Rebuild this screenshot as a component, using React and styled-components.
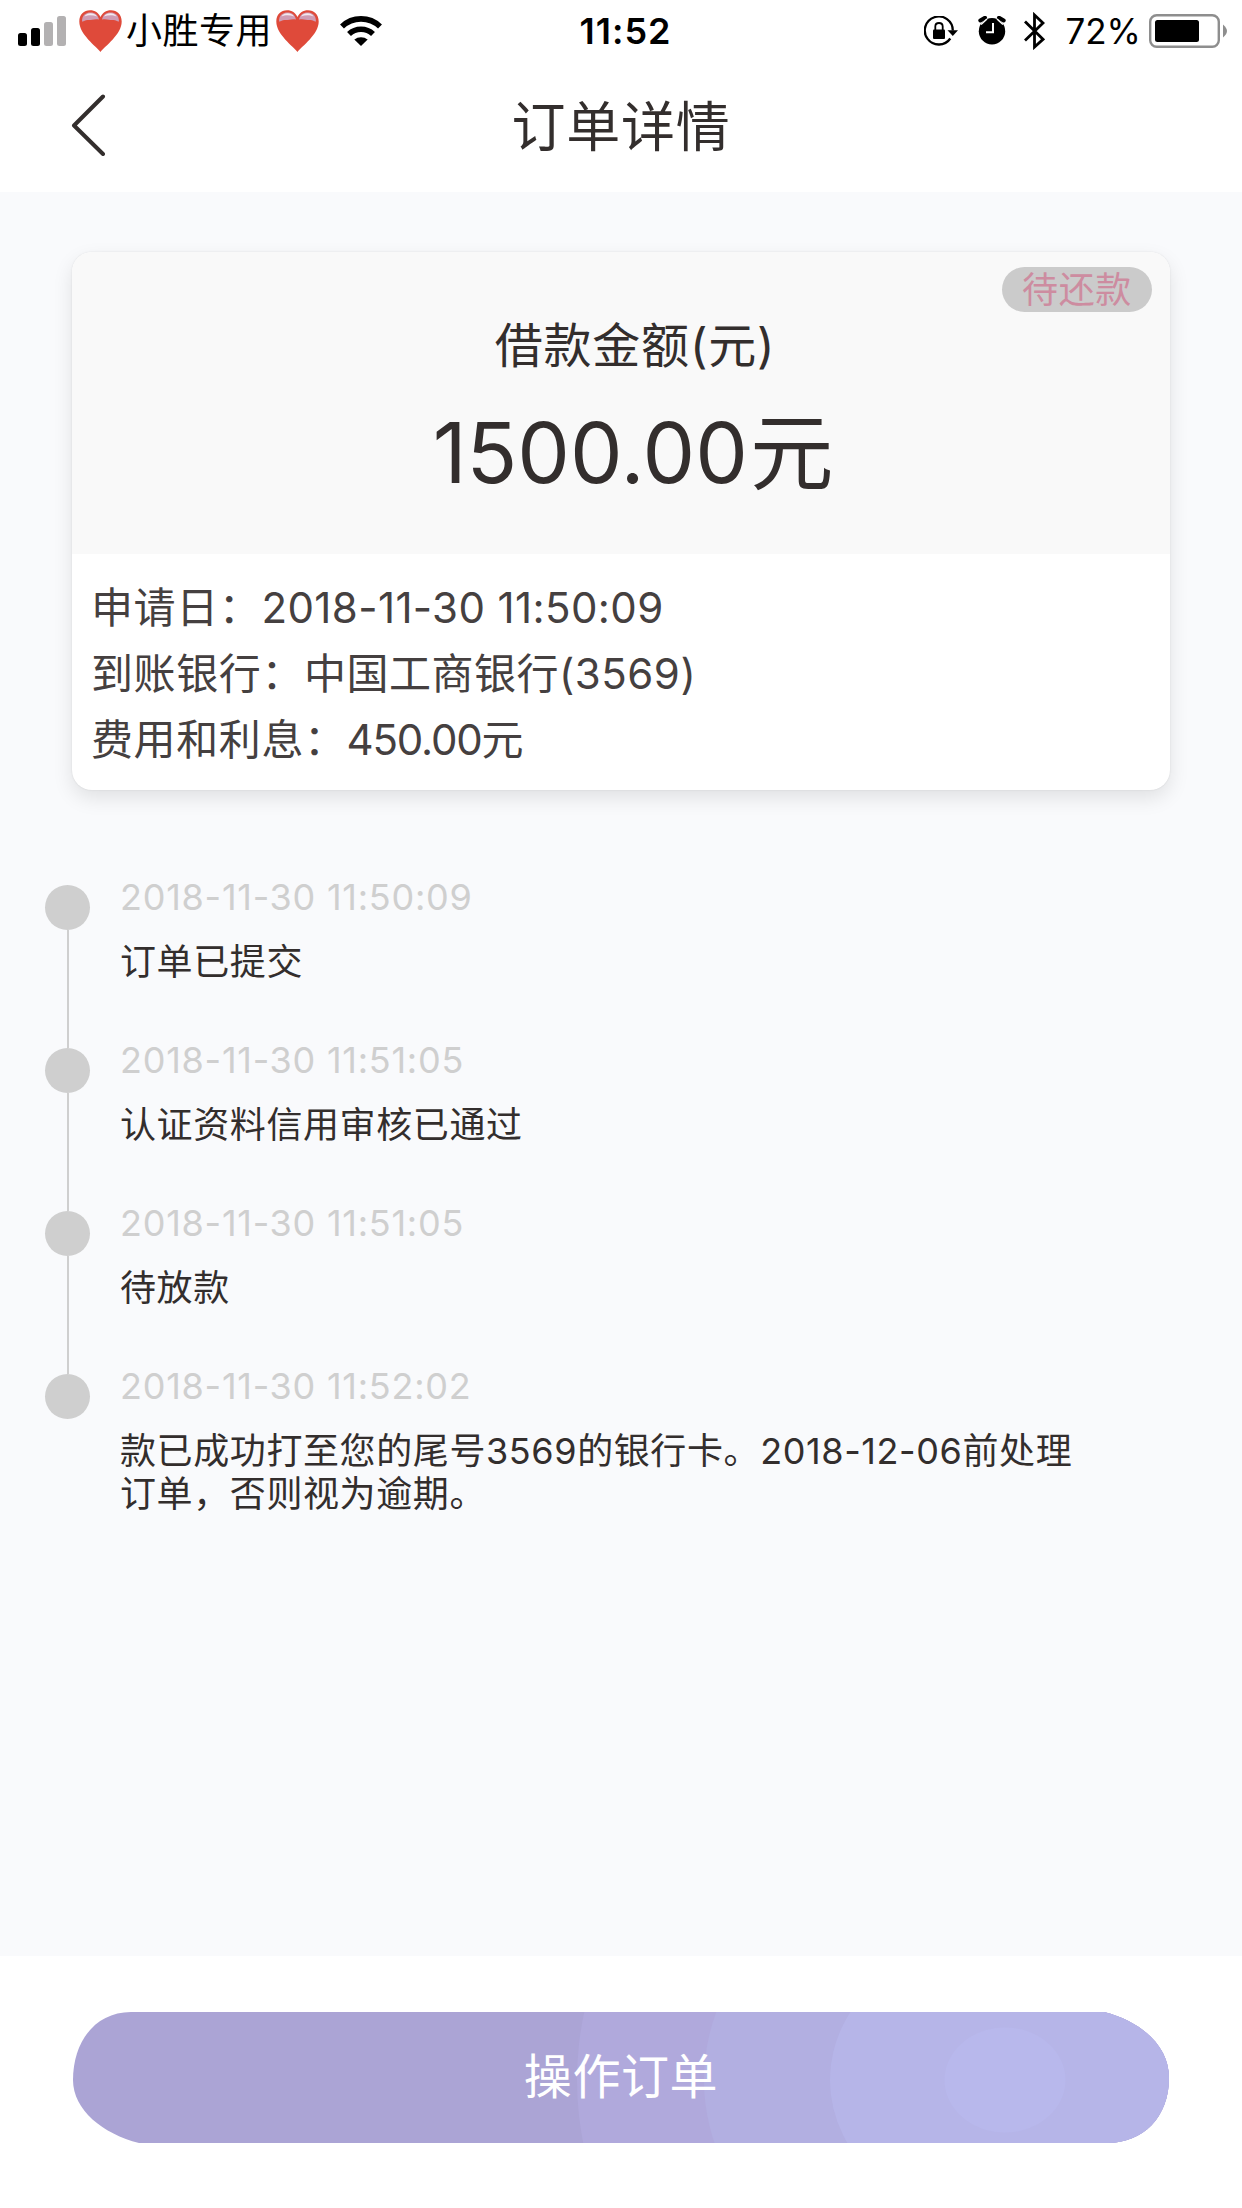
import styled, { createGlobalStyle } from "styled-components";

const details = [
  { label: "申请日：", value: "2018-11-30 11:50:09", spacing: 0.4 },
  { label: "到账银行：", value: "中国工商银行(3569)", spacing: 0.5 },
  { label: "费用和利息：", value: "450.00元", spacing: -1.2 },
];

const steps = [
  { time: "2018-11-30 11:50:09", text: "订单已提交" },
  { time: "2018-11-30 11:51:05", text: "认证资料信用审核已通过" },
  { time: "2018-11-30 11:51:05", text: "待放款" },
  {
    time: "2018-11-30 11:52:02",
    text: "款已成功打至您的尾号3569的银行卡。2018-12-06前处理订单，否则视为逾期。",
  },
];

const Signal = () => (
  <svg width="48" height="30" viewBox="0 0 48 30">
    <rect x="0" y="17" width="9" height="13" rx="2.5" />
    <rect x="13" y="12" width="9" height="18" rx="2.5" />
    <rect x="26" y="6" width="9" height="24" rx="2.5" fill="#b3b1b2" />
    <rect x="39" y="0" width="9" height="30" rx="2.5" fill="#b3b1b2" />
  </svg>
);

const Heart = () => (
  <svg width="43" height="42" viewBox="0 0 43 42">
    <path
      d="M21.5 42C17 36 0.3 24.5 0.3 11.5C0.3 4.5 5 0.3 11 0.3C16 0.3 19.5 3 21.5 7C23.5 3 27 0.3 32 0.3C38 0.3 42.7 4.5 42.7 11.5C42.7 24.5 26 36 21.5 42Z"
      fill="#df4a3a"
    />
    <path
      d="M3 11.5C3 5 7 2.5 11.5 2.5C16 2.5 19 5 20 9.5C15 8.5 12 10.5 9 10C6.5 9.6 4.5 12 3 11.5Z"
      fill="#cf9cb4"
    />
    <path
      d="M40 11.5C40 5 36 2.5 31.5 2.5C27 2.5 24 5 23 9.5C28 8.5 31 10.5 34 10C36.5 9.6 38.5 12 40 11.5Z"
      fill="#cf9cb4"
    />
    <path
      d="M5.5 6.5C8 2.3 15 2.3 18 6.5C14 4.8 9 4.8 5.5 6.5ZM37.5 6.5C35 2.3 28 2.3 25 6.5C29 4.8 34 4.8 37.5 6.5Z"
      fill="#f3e9ee"
    />
  </svg>
);

const Wifi = () => (
  <svg width="42" height="30" viewBox="0 0 42 30">
    <g fill="none" stroke="#000" strokeWidth="5.6">
      <path d="M2 10.5C12.5 0.3 29.5 0.3 40 10.5" />
      <path d="M9 18C15.6 11.7 26.4 11.7 33 18" />
    </g>
    <path d="M21 30L14.3 23.6C18 20.3 24 20.3 27.7 23.6Z" />
  </svg>
);

const RotationLock = () => (
  <svg width="34" height="30" viewBox="0 0 34 30">
    <path
      d="M26.3 22.5A14 14 0 1 1 28.8 14.5"
      fill="none"
      stroke="#000"
      strokeWidth="2.3"
    />
    <path d="M23.5 14.2H34L28.8 20Z" />
    <rect x="9" y="13.5" width="12" height="9.5" rx="1" />
    <path
      d="M11.3 14V10.5C11.3 5.8 18.7 5.8 18.7 10.5V14"
      fill="none"
      stroke="#000"
      strokeWidth="1.8"
    />
  </svg>
);

const Alarm = () => (
  <svg width="28" height="29" viewBox="0 0 28 29">
    <circle cx="14" cy="15.2" r="13.2" />
    <path
      d="M2.3 4.5L7 1.8M25.7 4.5L21 1.8"
      stroke="#000"
      strokeWidth="4"
      strokeLinecap="round"
    />
    <path
      d="M3 8.5L9 3M25 8.5L19 3"
      stroke="#fff"
      strokeWidth="1.6"
    />
    <path d="M15 7V16.3H8" fill="none" stroke="#fff" strokeWidth="2" />
  </svg>
);

const Bluetooth = () => (
  <svg width="21" height="38" viewBox="0 0 21 38">
    <path
      d="M1 9.5L19 27.3L10.5 35V3L19 11L1 28.5"
      fill="none"
      stroke="#000"
      strokeWidth="2.8"
    />
  </svg>
);

const Battery = () => (
  <svg width="78" height="34" viewBox="0 0 78 34">
    <rect
      x="1.2"
      y="1.2"
      width="68.6"
      height="31.6"
      rx="6.5"
      fill="none"
      stroke="#8e8e8e"
      strokeWidth="2.4"
    />
    <rect x="6" y="6" width="44" height="22" rx="2.5" />
    <path d="M74 10.5Q78 14 78 17Q78 20 74 23.5Z" fill="#8e8e8e" />
  </svg>
);

const ButtonShape = () => (
  <svg width="1096" height="131" viewBox="0 0 1096 131">
    <defs>
      <clipPath id="pill">
        <path d="M58 0H1031C1070 10 1096 35 1096 66C1096 105 1070 131 1034 131H66C30 122 0 98 0 68C0 30 22 0 58 0Z" />
      </clipPath>
    </defs>
    <g clipPath="url(#pill)">
      <rect width="1096" height="131" fill="#aba4d5" />
      <ellipse cx="932" cy="68" rx="428" ry="370" fill="#b0a9dc" />
      <ellipse cx="932" cy="68" rx="301" ry="240" fill="#b2afe1" />
      <ellipse cx="932" cy="68" rx="175" ry="145" fill="#b6b5e8" />
      <ellipse cx="932" cy="68" rx="60.5" ry="52.5" fill="#b8b8ec" />
    </g>
  </svg>
);

const App = () => {
  return (
    <>
      <GlobalStyle />
      <Page>
        <StatusBar>
          <StatusLeft>
            <Signal />
            <Carrier>
              <Heart />
              <span>小胜专用</span>
              <Heart />
            </Carrier>
            <Wifi />
          </StatusLeft>
          <Clock>11:52</Clock>
          <StatusRight>
            <RotationLock />
            <Alarm />
            <Bluetooth />
            <Percent>72%</Percent>
            <Battery />
          </StatusRight>
        </StatusBar>
        <Header>
          <BackButton aria-label="返回">
            <svg width="35" height="62" viewBox="0 0 35 62">
              <path
                d="M32 2.5L3 31.5L32 60"
                fill="none"
                stroke="#332e2d"
                strokeWidth="4"
                strokeLinecap="round"
                strokeLinejoin="round"
              />
            </svg>
          </BackButton>
          <Title>订单详情</Title>
        </Header>
        <Content>
          <Card>
            <Summary>
              <Badge>待还款</Badge>
              <SummaryLabel>借款金额(元)</SummaryLabel>
              <Amount>
                1500.00<span>元</span>
              </Amount>
            </Summary>
            <Details>
              {details.map(({ label, value, spacing }) => (
                <DetailRow key={label}>
                  {label}
                  <DetailValue $spacing={spacing}>{value}</DetailValue>
                </DetailRow>
              ))}
            </Details>
          </Card>
          <Timeline>
            {steps.map(({ time, text }, index) => (
              <Step key={index}>
                <Rail>
                  <Dot />
                  {index < steps.length - 1 && <Line />}
                </Rail>
                <StepBody>
                  <StepTime>{time}</StepTime>
                  <StepText>{text}</StepText>
                </StepBody>
              </Step>
            ))}
          </Timeline>
        </Content>
        <Footer>
          <ActionButton>
            <ButtonShape />
            <span>操作订单</span>
          </ActionButton>
        </Footer>
      </Page>
    </>
  );
};

const GlobalStyle = createGlobalStyle`
  * {
    box-sizing: border-box;
    margin: 0;
    padding: 0;
  }

  body {
    background-color: #fff;
    color: #332e2d;
    font-family: Inter, "Noto Sans CJK SC", sans-serif;
  }

  svg {
    display: block;
    flex-shrink: 0;
  }
`;

const Page = styled.div`
  display: flex;
  flex-direction: column;
  width: 1242px;
  height: 2208px;
  overflow: hidden;
`;

const StatusBar = styled.div`
  display: grid;
  grid-template-columns: 1fr auto 1fr;
  align-items: center;
  height: 60px;
  padding: 0 15px 0 18px;
  color: #000;
  font-size: 36px;
  line-height: 60px;
`;

const StatusLeft = styled.div`
  display: flex;
  align-items: center;
`;

const Carrier = styled.div`
  display: flex;
  align-items: center;
  gap: 4px;
  margin: 0 21px 0 13px;
  letter-spacing: 0.5px;

  span {
    padding-top: 1px;
  }
`;

const Clock = styled.div`
  padding-left: 6px;
  font-size: 36px;
  font-weight: 600;
  letter-spacing: 1px;
`;

const StatusRight = styled.div`
  display: flex;
  align-items: center;
  justify-content: flex-end;

  svg:nth-child(2) {
    margin: 0 18px 0 20px;
  }
`;

const Percent = styled.span`
  margin: 1px 8px 0 20px;
  font-size: 35px;
`;

const Header = styled.header`
  display: grid;
  grid-template-columns: 200px 1fr 200px;
  align-items: center;
  height: 132px;
  padding-bottom: 3px;
`;

const BackButton = styled.button`
  width: 106px;
  padding-left: 71px;
  border: none;
  background: none;
  cursor: pointer;
`;

const Title = styled.h1`
  padding-bottom: 3px;
  font-size: 54px;
  font-weight: 400;
  letter-spacing: 0.8px;
  text-align: center;
`;

const Content = styled.main`
  flex: 1;
  padding: 60px 72px 0;
  background-color: #f9fafc;
`;

const Card = styled.section`
  height: 538px;
  overflow: hidden;
  border-radius: 20px;
  background-color: #fff;
  box-shadow:
    0 0 2px rgba(0, 0, 0, 0.1),
    0 8px 20px rgba(0, 0, 0, 0.1);
`;

const Summary = styled.div`
  position: relative;
  display: flex;
  flex-direction: column;
  align-items: center;
  height: 302px;
  padding: 64px 0 0 24px;
  background-color: #f9f9f9;
`;

const Badge = styled.span`
  position: absolute;
  top: 15px;
  right: 18px;
  width: 150px;
  height: 45px;
  border-radius: 23px;
  background-color: #cbcbcb;
  color: #cd8ca0;
  font-size: 36px;
  line-height: 46px;
  letter-spacing: 0.7px;
  text-align: center;
`;

const SummaryLabel = styled.p`
  padding-left: 4px;
  font-size: 48px;
  line-height: 60px;
  letter-spacing: 0.8px;
`;

const Amount = styled.p`
  margin-top: 27px;
  font-size: 83.5px;
  line-height: 100px;

  span {
    margin-left: 2px;
  }
`;

const Details = styled.div`
  padding: 21px 19px 0;
  color: #454040;
`;

const DetailRow = styled.p`
  font-size: 42px;
  line-height: 66px;
  letter-spacing: 0.6px;
`;

const DetailValue = styled.span`
  letter-spacing: ${({ $spacing }) => $spacing}px;
`;

const Timeline = styled.ul`
  margin: 86px -27px 0;
  list-style: none;
`;

const Step = styled.li`
  display: flex;
  min-height: 163px;
`;

const Rail = styled.div`
  display: flex;
  flex-direction: column;
  align-items: center;
  width: 45px;
  padding-top: 9px;
`;

const Dot = styled.span`
  width: 45px;
  height: 45px;
  border-radius: 50%;
  background-color: #cfcfcf;
`;

const Line = styled.span`
  flex: 1;
  width: 2px;
  margin-bottom: -9px;
  background-color: #cfcfcf;
`;

const StepBody = styled.div`
  width: 970px;
  margin-left: 30px;
  font-size: 36px;
  line-height: 43.5px;
`;

const StepTime = styled.p`
  color: #cfcfcf;
  letter-spacing: 0.75px;
`;

const StepText = styled.p`
  margin-top: 21px;
  letter-spacing: 0.6px;
`;

const Footer = styled.footer`
  display: flex;
  justify-content: center;
  height: 252px;
  padding-top: 56px;
  background-color: #fff;
`;

const ActionButton = styled.button`
  display: grid;
  width: 1096px;
  height: 131px;
  border: none;
  background: none;
  color: #fff;
  font-family: inherit;
  font-size: 48px;
  line-height: 129px;
  letter-spacing: 0.6px;
  cursor: pointer;

  > * {
    grid-area: 1 / 1;
  }
`;

export default App;
